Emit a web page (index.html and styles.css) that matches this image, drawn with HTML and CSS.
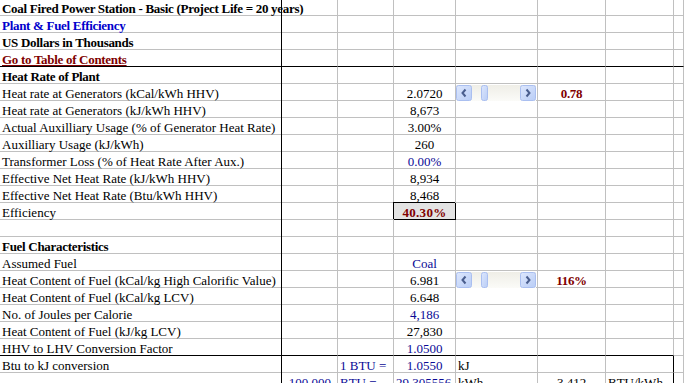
FILE: index.html
```html
<!DOCTYPE html>
<html>
<head>
<meta charset="utf-8">
<link rel="stylesheet" href="styles.css">
</head>
<body>
<div class="sheet">
  <div class="row"><div class="c b nob">Coal Fired Power Station - Basic (Project Life = 20 years)</div><div class="c"></div><div class="c"></div><div class="c"></div><div class="c"></div><div class="c"></div><div class="c"></div><div class="c"></div></div>
  <div class="row"><div class="c b blue">Plant &amp; Fuel Efficiency</div><div class="c"></div><div class="c"></div><div class="c"></div><div class="c"></div><div class="c"></div><div class="c"></div><div class="c"></div></div>
  <div class="row"><div class="c b">US Dollars in Thousands</div><div class="c"></div><div class="c"></div><div class="c"></div><div class="c"></div><div class="c"></div><div class="c"></div><div class="c"></div></div>
  <div class="row freeze-h"><div class="c b red link">Go to Table of Contents</div><div class="c"></div><div class="c"></div><div class="c"></div><div class="c"></div><div class="c"></div><div class="c"></div><div class="c"></div></div>
  <div class="row"><div class="c b">Heat Rate of Plant</div><div class="c"></div><div class="c"></div><div class="c"></div><div class="c"></div><div class="c"></div><div class="c"></div><div class="c"></div></div>
  <div class="row"><div class="c">Heat rate at Generators (kCal/kWh HHV)</div><div class="c"></div><div class="c"></div><div class="c ctr">2.0720</div><div class="c ctl">
    <svg class="spin" width="80" height="16" viewBox="0 0 80 16">
      <defs>
        <linearGradient id="trk1" x1="0" y1="0" x2="0" y2="1"><stop offset="0" stop-color="#efeee7"/><stop offset="1" stop-color="#fbfbf8"/></linearGradient>
        <linearGradient id="btn1" x1="0" y1="0" x2="1" y2="1"><stop offset="0" stop-color="#dde7fd"/><stop offset="1" stop-color="#b9cdf6"/></linearGradient>
      </defs>
      <rect x="0" y="0" width="80" height="16" fill="url(#trk1)"/>
      <rect x="0.5" y="0.5" width="15" height="15" rx="2" fill="url(#btn1)" stroke="#aabff0"/>
      <path d="M9.5 4.5 L6.5 8 L9.5 11.5" fill="none" stroke="#4a5e8e" stroke-width="2"/>
      <rect x="25.5" y="0.5" width="6" height="15" rx="2" fill="url(#btn1)" stroke="#aabff0"/>
      <rect x="64.5" y="0.5" width="15" height="15" rx="2" fill="url(#btn1)" stroke="#aabff0"/>
      <path d="M70.5 4.5 L73.5 8 L70.5 11.5" fill="none" stroke="#4a5e8e" stroke-width="2"/>
    </svg></div><div class="c ctr b red">0.78</div><div class="c"></div><div class="c"></div></div>
  <div class="row"><div class="c">Heat rate at Generators (kJ/kWh HHV)</div><div class="c"></div><div class="c"></div><div class="c ctr">8,673</div><div class="c"></div><div class="c"></div><div class="c"></div><div class="c"></div></div>
  <div class="row"><div class="c">Actual Auxilliary Usage (% of Generator Heat Rate)</div><div class="c"></div><div class="c"></div><div class="c ctr">3.00%</div><div class="c"></div><div class="c"></div><div class="c"></div><div class="c"></div></div>
  <div class="row"><div class="c">Auxilliary Usage (kJ/kWh)</div><div class="c"></div><div class="c"></div><div class="c ctr">260</div><div class="c"></div><div class="c"></div><div class="c"></div><div class="c"></div></div>
  <div class="row"><div class="c">Transformer Loss (% of Heat Rate After Aux.)</div><div class="c"></div><div class="c"></div><div class="c ctr navy">0.00%</div><div class="c"></div><div class="c"></div><div class="c"></div><div class="c"></div></div>
  <div class="row"><div class="c">Effective Net Heat Rate (kJ/kWh HHV)</div><div class="c"></div><div class="c"></div><div class="c ctr">8,934</div><div class="c"></div><div class="c"></div><div class="c"></div><div class="c"></div></div>
  <div class="row"><div class="c">Effective Net Heat Rate (Btu/kWh HHV)</div><div class="c"></div><div class="c"></div><div class="c ctr">8,468</div><div class="c"></div><div class="c"></div><div class="c"></div><div class="c"></div></div>
  <div class="row"><div class="c">Efficiency</div><div class="c"></div><div class="c"></div><div class="c ctr b red result">40.30%</div><div class="c"></div><div class="c"></div><div class="c"></div><div class="c"></div></div>
  <div class="row"><div class="c"></div><div class="c"></div><div class="c"></div><div class="c"></div><div class="c"></div><div class="c"></div><div class="c"></div><div class="c"></div></div>
  <div class="row"><div class="c b">Fuel Characteristics</div><div class="c"></div><div class="c"></div><div class="c"></div><div class="c"></div><div class="c"></div><div class="c"></div><div class="c"></div></div>
  <div class="row"><div class="c">Assumed Fuel</div><div class="c"></div><div class="c"></div><div class="c ctr navy">Coal</div><div class="c"></div><div class="c"></div><div class="c"></div><div class="c"></div></div>
  <div class="row"><div class="c">Heat Content of Fuel (kCal/kg High Calorific Value)</div><div class="c"></div><div class="c"></div><div class="c ctr">6.981</div><div class="c ctl">
    <svg class="spin" width="80" height="16" viewBox="0 0 80 16">
      <defs>
        <linearGradient id="trk2" x1="0" y1="0" x2="0" y2="1"><stop offset="0" stop-color="#efeee7"/><stop offset="1" stop-color="#fbfbf8"/></linearGradient>
        <linearGradient id="btn2" x1="0" y1="0" x2="1" y2="1"><stop offset="0" stop-color="#dde7fd"/><stop offset="1" stop-color="#b9cdf6"/></linearGradient>
      </defs>
      <rect x="0" y="0" width="80" height="16" fill="url(#trk2)"/>
      <rect x="0.5" y="0.5" width="15" height="15" rx="2" fill="url(#btn2)" stroke="#aabff0"/>
      <path d="M9.5 4.5 L6.5 8 L9.5 11.5" fill="none" stroke="#4a5e8e" stroke-width="2"/>
      <rect x="25.5" y="0.5" width="6" height="15" rx="2" fill="url(#btn2)" stroke="#aabff0"/>
      <rect x="64.5" y="0.5" width="15" height="15" rx="2" fill="url(#btn2)" stroke="#aabff0"/>
      <path d="M70.5 4.5 L73.5 8 L70.5 11.5" fill="none" stroke="#4a5e8e" stroke-width="2"/>
    </svg></div><div class="c ctr b red">116%</div><div class="c"></div><div class="c"></div></div>
  <div class="row"><div class="c">Heat Content of Fuel (kCal/kg LCV)</div><div class="c"></div><div class="c"></div><div class="c ctr">6.648</div><div class="c"></div><div class="c"></div><div class="c"></div><div class="c"></div></div>
  <div class="row"><div class="c">No. of Joules per Calorie</div><div class="c"></div><div class="c"></div><div class="c ctr navy">4,186</div><div class="c"></div><div class="c"></div><div class="c"></div><div class="c"></div></div>
  <div class="row"><div class="c">Heat Content of Fuel (kJ/kg LCV)</div><div class="c"></div><div class="c"></div><div class="c ctr">27,830</div><div class="c"></div><div class="c"></div><div class="c"></div><div class="c"></div></div>
  <div class="row boxtop"><div class="c">HHV to LHV Conversion Factor</div><div class="c"></div><div class="c"></div><div class="c ctr navy">1.0500</div><div class="c"></div><div class="c"></div><div class="c"></div><div class="c plain"></div></div>
  <div class="row"><div class="c">Btu to kJ conversion</div><div class="c"></div><div class="c navy">1 BTU =</div><div class="c ctr navy">1.0550</div><div class="c">kJ</div><div class="c"></div><div class="c boxr"></div><div class="c"></div></div>
  <div class="row"><div class="c"></div><div class="c rt navy">100,000</div><div class="c navy">BTU =</div><div class="c rt2 navy">29.305556</div><div class="c">kWh</div><div class="c ctr">3.412</div><div class="c boxr">BTU/kWh</div><div class="c"></div></div>
  <div class="freeze-v"></div>
</div>
</body>
</html>
```
FILE: styles.css
```css
html, body {
  margin: 0;
  padding: 0;
  background: #fff;
  overflow: hidden;
}
.sheet {
  position: relative;
  margin-top: -1px;
  font-family: "Liberation Serif", "Times New Roman", serif;
  font-size: 13px;
  color: #000;
}
.row {
  display: grid;
  grid-template-columns: 282px 56px 56px 62px 82px 68px 68px 10px;
  height: 17px;
}
.c {
  box-sizing: border-box;
  height: 17px;
  border-right: 1px solid #c0c0c0;
  border-bottom: 1px solid #c0c0c0;
  padding: 3px 2px 0 2px;
  line-height: 13px;
  white-space: nowrap;
}
.row .c:first-child {
  border-right-color: #000;
}
.c.nob { overflow: visible; }
.b { font-weight: bold; letter-spacing: -0.3px; }
.blue { color: #0000cc; }
.red { color: #800000; }
.navy { color: #0a0a96; }
.link { text-decoration: underline; }
.ctr { text-align: center; }
.rt { text-align: right; padding-right: 6px; }
.rt2 { text-align: right; padding-right: 16px; }
.c.ctl { position: relative; padding: 0; }
.spin {
  position: absolute;
  left: 0;
  top: 1px;
  display: block;
}
.result {
  background: #e3e3e3;
  border-right-color: #000;
  border-bottom-color: #000;
  box-shadow: -1px -1px 0 #000;
  letter-spacing: 0.3px;
}
.freeze-h .c { border-bottom-color: #000; }
.boxtop .c { border-bottom-color: #000; }
.boxtop .c.plain { border-bottom-color: #c0c0c0; }
.c.boxr { border-right-color: #000; }
.freeze-v {
  position: absolute;
  left: 281px;
  top: 0;
  width: 1px;
  height: 400px;
  background: #000;
}
```
